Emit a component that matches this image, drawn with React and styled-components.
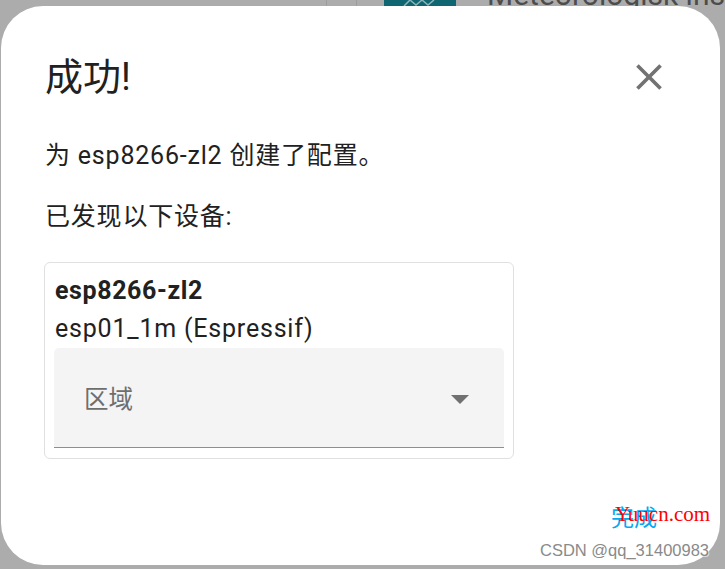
import React from "react";
import styled, { createGlobalStyle } from "styled-components";

const GlobalStyle = createGlobalStyle`
  html, body {
    margin: 0;
    padding: 0;
    background: #acacac;
    overflow: hidden;
  }
  body {
    font-family: Roboto, "Noto Sans CJK SC", sans-serif;
    -webkit-font-smoothing: antialiased;
  }
`;

const Page = styled.div`
  position: relative;
  width: 725px;
  height: 569px;
  box-sizing: border-box;
  padding: 0 5px 4px 1px;
  display: flex;
  flex-direction: column;
  background: #acacac;
  overflow: hidden;
`;

/* the page behind the dimmed scrim, only its top edge shows */
const BehindStrip = styled.div`
  height: 6px;
  display: flex;
  align-items: flex-end;
  padding-left: 325px;
`;

const Divider = styled.div`
  flex-shrink: 0;
  width: 1px;
  height: 6px;
  background: #9c9c9c;
  margin-right: ${(p) => p.$gap}px;
`;

const LogoTile = styled.div`
  flex-shrink: 0;
  width: 72px;
  height: 6px;
  background: #0f6570;
  display: flex;
  justify-content: center;
  align-items: flex-end;
  margin-right: 31px;
  svg {
    display: block;
  }
`;

const BehindTitle = styled.div`
  flex-shrink: 0;
  font-family: Roboto, sans-serif;
  font-size: 30px;
  line-height: 30px;
  color: #4c4c4c;
  white-space: nowrap;
  margin-bottom: -4px;
`;

const Dialog = styled.div`
  position: relative;
  z-index: 1;
  flex: 1;
  background: #fff;
  border-radius: 42px;
  display: flex;
  flex-direction: column;
`;

const Header = styled.div`
  display: flex;
  align-items: center;
  justify-content: space-between;
  padding: 49px 49px 0 44px;
`;

const Title = styled.h2`
  margin: 0;
  font-weight: 400;
  font-size: 38px;
  line-height: 44px;
  color: #212121;
`;

const CloseButton = styled.button`
  width: 44px;
  height: 44px;
  padding: 0;
  border: 0;
  background: none;
  color: #727272;
  cursor: pointer;
  svg {
    display: block;
  }
`;

const Body = styled.div`
  padding: 0 44px;
  flex: 1;
`;

const Text = styled.p`
  margin: ${(p) => p.$top}px 0 0;
  font-size: 25px;
  line-height: 30px;
  letter-spacing: 0.8px;
  color: #212121;
`;

const Card = styled.div`
  margin-top: 30px;
  margin-left: -1px;
  width: 470px;
  box-sizing: border-box;
  border: 1px solid #e0e0e0;
  border-radius: 6px;
  padding: 13px 9px 10px;
`;

const DeviceName = styled.div`
  font-size: 25px;
  line-height: 30px;
  font-weight: 700;
  letter-spacing: 0.6px;
  color: #212121;
  padding-left: 1px;
`;

const DeviceModel = styled.div`
  font-size: 25px;
  line-height: 30px;
  letter-spacing: 0.8px;
  color: #212121;
  margin-top: 8px;
  padding-left: 1px;
`;

const Select = styled.div`
  margin-top: 4px;
  height: 99px;
  background: #f4f4f4;
  border-radius: 5px 5px 0 0;
  border-bottom: 1px solid #8e8e8e;
  display: flex;
  align-items: center;
  justify-content: space-between;
  padding: 0 35px 0 30px;
`;

const SelectLabel = styled.span`
  font-size: 24.5px;
  color: #6e6e6e;
`;

const Arrow = styled.span`
  width: 0;
  height: 0;
  border-left: 9px solid transparent;
  border-right: 9px solid transparent;
  border-top: 9px solid #707070;
  margin-top: 4px;
`;

const Footer = styled.div`
  display: flex;
  justify-content: flex-end;
  padding: 0 63px 32px 0;
`;

const DoneButton = styled.button`
  border: 0;
  background: none;
  padding: 0;
  font-family: Roboto, "Noto Sans CJK SC", sans-serif;
  font-size: 23px;
  line-height: 28px;
  color: #03a9f4;
  cursor: pointer;
`;

const SiteMark = styled.div`
  position: absolute;
  left: 615px;
  top: 502px;
  z-index: 2;
  font-family: "Liberation Serif", serif;
  font-size: 21px;
  color: #ff0000;
  white-space: nowrap;
`;

const UserMark = styled.div`
  position: absolute;
  left: 540px;
  top: 541px;
  z-index: 2;
  font-family: "Liberation Sans", Arial, sans-serif;
  font-size: 16.5px;
  color: #8a8a8a;
  text-shadow: 1px 1px 0 rgba(255, 255, 255, 0.6);
  white-space: nowrap;
`;

const CloseIcon = () => (
  <svg width="44" height="44" viewBox="0 0 24 24" fill="currentColor">
    <path d="M19 6.41L17.59 5 12 10.59 6.41 5 5 6.41 10.59 12 5 17.59 6.41 19 12 13.41 17.59 19 19 17.59 13.41 12z" />
  </svg>
);

export default function App() {
  return (
    <>
      <GlobalStyle />
      <Page>
        <BehindStrip>
          <Divider $gap={29} />
          <Divider $gap={27} />
          <LogoTile>
            <svg width="34" height="6" viewBox="0 0 34 6">
              <polyline
                points="1,6 7,0 13,5 19,0 25,5 31,0"
                fill="none"
                stroke="#8fb4b9"
                strokeWidth="1.5"
              />
            </svg>
          </LogoTile>
          <BehindTitle>Meteorologisk institutt</BehindTitle>
        </BehindStrip>
        <Dialog>
          <Header>
            <Title>成功!</Title>
            <CloseButton aria-label="关闭">
              <CloseIcon />
            </CloseButton>
          </Header>
          <Body>
            <Text $top={42}>为 esp8266-zl2 创建了配置。</Text>
            <Text $top={31}>已发现以下设备:</Text>
            <Card>
              <DeviceName>esp8266-zl2</DeviceName>
              <DeviceModel>esp01_1m (Espressif)</DeviceModel>
              <Select>
                <SelectLabel>区域</SelectLabel>
                <Arrow />
              </Select>
            </Card>
          </Body>
          <Footer>
            <DoneButton>完成</DoneButton>
          </Footer>
        </Dialog>
        <SiteMark>Yuucn.com</SiteMark>
        <UserMark>CSDN @qq_31400983</UserMark>
      </Page>
    </>
  );
}
